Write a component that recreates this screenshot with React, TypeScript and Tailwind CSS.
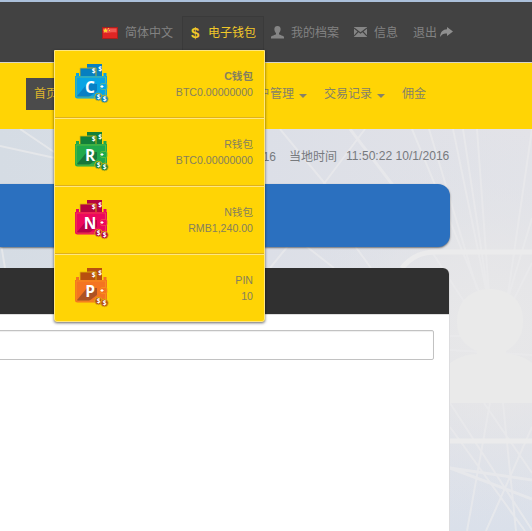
import React from 'react';

type Tone = { main: string; dark: string; line: string; shade: string };
type Wallet = { letter: string; name: string; amount: string; tone: Tone; bold?: boolean };

const wallets: Wallet[] = [
  { letter: 'C', name: 'C钱包', amount: 'BTC0.00000000', bold: true, tone: { main: '#08a4e4', dark: '#077fc0', line: '#65b98c', shade: '#087fc5' } },
  { letter: 'R', name: 'R钱包', amount: 'BTC0.00000000', tone: { main: '#20a94b', dark: '#138039', line: '#65bf3b', shade: '#17763a' } },
  { letter: 'N', name: 'N钱包', amount: 'RMB1,240.00', tone: { main: '#ed075c', dark: '#b5043f', line: '#f04b4a', shade: '#b80049' } },
  { letter: 'P', name: 'PIN', amount: '10', tone: { main: '#f47421', dark: '#b8500f', line: '#f8931c', shade: '#ad5224' } },
];

function WalletIcon({ letter, tone }: { letter: string; tone: Tone }) {
  return (
    <svg width="36" height="42" viewBox="0 0 36 42" className="block shrink-0 font-['Open_Sans',sans-serif]">
      <rect x="12" y="2" width="15" height="14" fill={tone.dark} />
      <path d="M1 11h3v4H1zM28.5 11h3v5h-3z" fill={tone.main} />
      <path d="M5 6h16V16H5z" fill={tone.dark} stroke="#e1b90b" strokeWidth=".8" />
      <path d="M0 14h32v20a2.5 2.5 0 0 1-2.5 2.5h-27A2.5 2.5 0 0 1 0 34V14z" fill={tone.main} />
      <path d="M2 34 12 22 22 22 22 29 14 35H2z" fill={tone.shade} />
      <path d="M1.2 15h29.3v20H3.5c-1.5 0-2.3-1-2.3-2V15" fill="none" stroke={tone.line} strokeWidth=".8" />
      <rect x="25.5" y="21.5" width="6.5" height="6" rx="1.5" fill={tone.main} stroke={tone.line} strokeWidth=".8" />
      <path d="M25.5 24.5h3M27 23v3" stroke="white" strokeWidth="1.1" />
      <text x="15" y="30.5" textAnchor="middle" fill="white" fontSize="15.5" fontWeight="700">{letter}</text>
      <text x="18.5" y="11.3" textAnchor="middle" fill="white" fontSize="6.5" fontWeight="700">$</text>
      <text x="25" y="8.5" textAnchor="middle" fill="white" fontSize="6.5" fontWeight="700">$</text>
      <circle cx="23.5" cy="35" r="3.8" fill={tone.dark} stroke="#e1b90b" strokeWidth=".8" />
      <circle cx="29.5" cy="37" r="3.8" fill={tone.dark} stroke="#e1b90b" strokeWidth=".8" />
      <text x="23.5" y="37.4" textAnchor="middle" fill="white" fontSize="6.5" fontWeight="700">$</text>
      <text x="29.5" y="39.4" textAnchor="middle" fill="white" fontSize="6.5" fontWeight="700">$</text>
    </svg>
  );
}

function WalletMenu() {
  return (
    <div className="absolute top-[33px] right-[-2px] z-20 w-[211px] rounded-b-[3px] border border-[#ffe780] bg-[#ffd405] shadow-[0_1px_3px_rgba(0,0,0,0.6)]">
      {wallets.map((w, i) => (
        <div key={w.letter} className={`flex justify-between pl-5 pr-[11px] ${i === 0 ? 'h-[67px] pt-[11px]' : 'pt-3 shadow-[inset_0_1px_0_#ffe780]'} ${i === 1 || i === 2 ? 'h-[68px]' : ''} ${i < 3 ? 'border-b border-[#dfb11b]' : 'h-[67px]'}`}>
          <WalletIcon letter={w.letter} tone={w.tone} />
          <div className="pt-1.5 text-right text-[10.6px] leading-4 text-[#85805f]">
            <div className={w.bold ? 'font-bold' : ''}>{w.name}</div>
            <div>{w.amount}</div>
          </div>
        </div>
      ))}
    </div>
  );
}

function Flag() {
  return (
    <svg width="16" height="12" viewBox="0 0 16 12" className="mr-[7px]">
      <rect x=".5" y=".5" width="15" height="11" fill="#df2524" stroke="#a9201d" />
      <path d="M1.5 1.5h13v4c-5-1-8 1-13 0z" fill="#ef5750" />
      <path d="m3.5 1 .8 1.8h1.9L4.7 4l.6 1.8-1.8-1.1-1.8 1.1.6-1.8-1.5-1.2h1.9z" fill="#ffd52b" />
      <path d="M6 1h1v1H6zM7 3h1v1H7z" fill="#ffd52b" />
    </svg>
  );
}

function Caret() {
  return <span className="ml-[5px] mt-[3px] border-x-4 border-t-4 border-x-transparent border-t-[#858169]" />;
}

function TopBar() {
  return (
    <header className="h-[63px] border-t-2 border-[#abc0da] bg-[#424242] shadow-[inset_0_-1px_0_#d9d5c5]">
      <div className="flex h-full items-start pl-[102px] pt-[15px] text-[12px] leading-8 text-[#828282]">
        <div className="flex h-8 w-20 items-center"><Flag />简体中文</div>
        <div className="relative -mt-px flex h-[46px] w-[82px] items-start border border-[#3a3a3a] bg-[#404040] pl-2 text-[#f1c729]">
          <span className="w-[17px] text-[15px] font-bold leading-[31px]">$</span>
          <span className="leading-8">电子钱包</span>
          <WalletMenu />
        </div>
        <div className="ml-[7px] flex h-8 w-[83px] items-center">
          <svg width="13" height="13" viewBox="0 0 13 13" className="mr-[7px] -mt-0.5" fill="#858585">
            <path d="M6.5 0C8.8 0 9.9 1.4 9.6 3.8 9.3 5.6 8.7 6.3 8 7v1.3c.4.7 4.7 1.4 5 2.7v1.5H0V11c.3-1.3 4.5-2 5-2.7V7C4.2 6.3 3.7 5.6 3.4 3.8 3.1 1.4 4.2 0 6.5 0z" />
          </svg>
          我的档案
        </div>
        <div className="flex h-8 w-[60px] items-center">
          <svg width="13" height="10" viewBox="0 0 13 10" className="mr-[7px] -mt-0.5">
            <path d="M0 0h13v10H0z" fill="#858585" />
            <path d="m0 1 6.5 5L13 1M0 9l4.3-4.5M13 9 8.7 4.5" fill="none" stroke="#424242" strokeWidth="1.1" />
          </svg>
          信息
        </div>
        <div className="-ml-px flex h-8 items-center">退出
          <svg width="13" height="10" viewBox="0 0 13 10" className="ml-[3px] -mt-0.5" fill="#8f8f8f">
            <path d="M7 0 13 4.5 7 9V6.5C4 6.2 2 7 0 10c.3-5.2 3-7.6 7-7.8z" />
          </svg>
        </div>
      </div>
    </header>
  );
}

function Backdrop() {
  return (
    <svg className="absolute inset-0" width="532" height="402" viewBox="0 129 532 402">
      <defs>
        <linearGradient id="sky" x1="0" x2="1">
          <stop offset="0" stopColor="#d5dce4" /><stop offset=".5" stopColor="#dcdfe7" /><stop offset="1" stopColor="#e3e3e8" />
        </linearGradient>
        <radialGradient id="glow" gradientUnits="userSpaceOnUse" cx="490" cy="330" r="200">
          <stop offset="0" stopColor="#e8e8e9" /><stop offset=".4" stopColor="#e6e6e8" stopOpacity=".8" /><stop offset="1" stopColor="#dce1e9" stopOpacity="0" />
        </radialGradient>
        <linearGradient id="base" x1="0" x2="0" y1="0" y2="1">
          <stop offset=".65" stopColor="#dce1ea" stopOpacity="0" /><stop offset="1" stopColor="#dae0ea" />
        </linearGradient>
      </defs>
      <rect y="129" width="532" height="402" fill="url(#sky)" />
      <rect y="129" width="532" height="402" fill="url(#base)" />
      <rect y="129" width="532" height="402" fill="url(#glow)" />
      <g fill="none" stroke="#ebebed" strokeWidth="2" opacity=".7">
        <path d="M412 129l68 165M429 129l48 160M453 129l34 165M463 129l25 165M477 129l12 165M532 129l-24 165M532 218l-24 80M532 263l-32 64M432 252l40 62M365 129 323 185M280 129l47 57M0 146l55 12M20 129l40 27M0 238l5 30" />
        <path d="M270 268 288 246M306 246l28 22M355 246l16 22M450 336h30M450 350l82 5M490 403l-23 128M503 403l13 128M532 427l-46 104M450 403l82 127M484 403l48 70M450 427l75 104" />
        <path d="M350 129 395 188M450 468l82 31M450 468l82 12" strokeWidth="3" />
      </g>
      <g fill="none" stroke="#ebebec" strokeWidth="5">
        <path d="M532 252H435c-14 0-25 6-33 16M450 441h82" />
      </g>
      <path d="M457 322c0-21 14-33 33-33s34 12 33 33c0 15-8 24-17 29v3c11 0 20 4 26 9v40h-82v-40c7-5 16-9 27-9v-3c-12-5-20-14-20-29z" fill="#eaeaea" />
    </svg>
  );
}

export default function App() {
  return (
    <div className="h-[531px] w-[532px] overflow-hidden bg-[#e0e2e8] font-['Liberation_Sans','Noto_Sans_CJK_SC',sans-serif]">
      <TopBar />
      <nav className="flex h-[66px] items-start bg-[#ffd405] pl-[26px] pt-[15px] text-[12px] text-[#858169]">
        <div className="flex h-8 w-10 items-center bg-[#4b4b4b] pl-2 text-[#dfb62b]">首页</div>
        <div className="ml-[192px] flex h-8 w-[66px] items-center whitespace-nowrap">户管理<Caret /></div>
        <div className="flex h-8 w-[78px] items-center whitespace-nowrap">交易记录<Caret /></div>
        <div className="flex h-8 items-center">佣金</div>
      </nav>
      <main className="relative h-[402px] overflow-hidden">
        <Backdrop />
        <div className="relative">
          <div className="flex h-[55px] w-[450px] items-center justify-end whitespace-pre text-[12px] text-[#777a7e]">
            <span className="mr-[13px]">16</span><span className="mr-[9px]">当地时间</span><span className="w-[104px] text-[12.1px]">11:50:22 10/1/2016</span>
          </div>
          <div className="h-[63px] w-[450px] rounded-r-[12px] bg-[#2b70bf] shadow-[0_1px_2px_rgba(0,0,0,0.5)]" />
          <section className="mt-[21px] h-[263px] w-[449px] rounded-tr-[6px] bg-white shadow-[1px_0_0_#dddddf]">
            <div className="h-[47px] rounded-tr-[6px] border-b border-[#dedede] bg-[#303030] bg-clip-padding" />
            <div className="-ml-1 mt-[15px] h-[30px] w-[438px] rounded-[2px] border border-[#c2c2c2] bg-white shadow-[inset_0_1px_1px_#eeeeee]" />
          </section>
        </div>
      </main>
    </div>
  );
}
